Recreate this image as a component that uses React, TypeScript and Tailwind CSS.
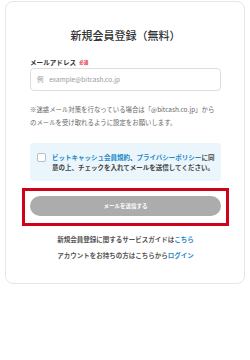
// 新規会員登録フォーム（縮小表示）
export default function App() {
  const jp = { fontFamily: '"Noto Sans CJK JP", "Noto Sans", sans-serif' }

  return (
    <div className="min-h-[360px] w-[250px] bg-white px-[5px] pt-px" style={jp}>
      {/* カード本体 */}
      <div className="rounded-[8px] border border-[#e6e6e6] bg-white px-[24px] pb-[23px] pr-[23px]">
        {/* タイトル */}
        <h1 className="pt-[25px] text-center text-[11px] leading-[16px] font-medium text-[#333]">
          新規会員登録（無料）
        </h1>

        {/* メールアドレス入力 */}
        <div className="mt-[14px] flex items-center gap-[3px]">
          <span className="text-[6.6px] leading-[10px] font-bold text-[#333]">メールアドレス</span>
          <span className="text-[4.5px] leading-[10px] font-bold text-[#e0303c]">必須</span>
        </div>
        <div className="mt-[1px] flex h-[23px] items-center rounded-[4px] border border-[#dedede] bg-white px-[6px]">
          <span className="text-[6.5px] whitespace-nowrap text-[#9a9a9a]">
            例&nbsp;&nbsp;&nbsp;&nbsp;example@bitcash.co.jp
          </span>
        </div>

        {/* 注意書き */}
        <p className="mt-[12px] text-[6.4px] leading-[13px] whitespace-nowrap text-[#666]">
          ※迷惑メール対策を行なっている場合は「@bitcash.co.jp」から
          <br />
          のメールを受け取れるように設定をお願いします。
        </p>

        {/* 同意チェック */}
        <div className="mt-[14px] flex h-[38px] items-center rounded-[4px] bg-[#eaf5fc] pl-[7px]">
          <span className="mr-[6px] h-[9px] w-[9px] shrink-0 self-start mt-[10px] rounded-[2px] border border-[#bdbdbd] bg-white" />
          <p className="text-[6.5px] leading-[10px] font-bold whitespace-nowrap text-[#444]">
            <span className="text-[#1d88c7]">ビットキャッシュ会員規約</span>、
            <span className="text-[#1d88c7]">プライバシーポリシー</span>に同
            <br />
            意の上、チェックを入れてメールを送信してください。
          </p>
        </div>

        {/* 送信ボタン（赤枠で強調） */}
        <div className="mx-[-8px] mt-[7px] border-[3px] border-[#d0021b] px-[5px] pt-[5px] pb-[7px]">
          <button
            type="button"
            className="flex h-[20px] w-full items-center justify-center rounded-full bg-[#acacac] text-[5.5px] font-bold text-white"
          >
            メールを送信する
          </button>
        </div>

        {/* リンク */}
        <div className="mt-[8px] flex flex-col items-center gap-[6px] text-[6.5px] leading-[10px] font-bold text-[#555]">
          <p>
            新規会員登録に関するサービスガイドは<span className="text-[#1d88c7]">こちら</span>
          </p>
          <p>
            アカウントをお持ちの方はこちらから<span className="text-[#1d88c7]">ログイン</span>
          </p>
        </div>
      </div>
    </div>
  )
}
